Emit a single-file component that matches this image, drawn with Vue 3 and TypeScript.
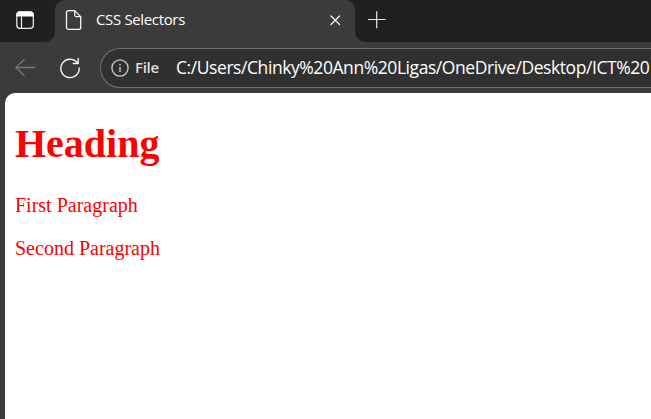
<script setup lang="ts">
const tabTitle: string = 'CSS Selectors'
const address: string = 'C:/Users/Chinky%20Ann%20Ligas/OneDrive/Desktop/ICT%20'
const paragraphs: string[] = ['First Paragraph', 'Second Paragraph']
</script>

<template>
  <div class="browser">
    <div class="strip">
      <div class="strip-left">
        <svg width="20" height="20" viewBox="0 0 20 20" fill="none" stroke="#f2f2f2" stroke-width="1.2">
          <rect x="1.8" y="1.8" width="16.5" height="16.5" rx="3" />
          <path d="M1.5 4.5a3 3 0 0 1 3-3h11a3 3 0 0 1 3 3v2h-17z" fill="#fff" stroke="none" />
          <path d="M6.5 6v12" />
        </svg>
      </div>
      <div class="tab-back">
        <div class="tab">
          <svg class="file" width="18" height="22" viewBox="0 0 18 22" fill="none" stroke="#f5f5f5" stroke-width="1.3" stroke-linejoin="round">
            <path d="M3.5 1.6h6.2l6 6v10.8a2 2 0 0 1-2 2H3.500a2 2 0 0 1-2-2V3.600a2 2 0 0 1 2-2z" />
            <path d="M9.700 1.600v4.500a1.500 1.500 0 0 0 1.500 1.500h4.500" />
          </svg>
          <span class="title">{{ tabTitle }}</span>
          <svg class="close" width="12" height="12" viewBox="0 0 12 12" stroke="#f5f5f5" stroke-width="1.3" stroke-linecap="round">
            <path d="M2 2l8.500 8.500M10.500 2l-8.500 8.500" />
          </svg>
        </div>
      </div>
      <div class="strip-right">
        <svg width="18" height="18" viewBox="0 0 18 18" stroke="#e8e8e8" stroke-width="1.2">
          <path d="M8.700 .3v17M.1 8.500h17.400" />
        </svg>
      </div>
    </div>
    <div class="toolbar">
      <svg class="back" width="22" height="20" viewBox="0 0 22 20" fill="none" stroke="#777" stroke-width="1.3">
        <path d="M10.500 1.300L1.800 9.500l8.700 8.200M2 9.500h19" />
      </svg>
      <svg class="reload" width="22" height="22" viewBox="0 0 22 22" fill="none" stroke="#f5f5f5" stroke-width="1.4" stroke-linecap="round" stroke-linejoin="round">
        <path d="M18.400 5.900A9.200 9.200 0 1 0 20.200 11" />
        <path d="M19.200 1.500v5h-5" />
      </svg>
      <div class="address">
        <svg width="18" height="18" viewBox="0 0 18 18" fill="none" stroke="#cfcfcf" stroke-width="1.3">
          <circle cx="9" cy="9" r="8.100" />
          <path d="M9 8v5" />
          <circle cx="9" cy="5.600" r=".9" fill="#cfcfcf" stroke="none" />
        </svg>
        <span class="scheme">File</span>
        <span class="url">{{ address }}</span>
      </div>
    </div>
    <main class="page">
      <h1>Heading</h1>
      <p v-for="text in paragraphs" :key="text">{{ text }}</p>
    </main>
  </div>
</template>

<style>
body {
  margin: 0;
  overflow: hidden;
}
</style>

<style scoped>
.browser {
  display: flex;
  flex-direction: column;
  width: 100vw;
  height: 100vh;
  overflow: hidden;
  background: #3b3b3b;
  font-family: "Open Sans", "Noto Sans", sans-serif;
}
svg {
  display: block;
  flex: none;
}
.strip {
  display: flex;
  flex: none;
  height: 42px;
}
.strip-left {
  box-sizing: border-box;
  width: 55px;
  padding: 10px 0 0 15px;
  background: #202020;
  border-bottom-right-radius: 10px;
}
.tab-back {
  width: 300px;
  background: linear-gradient(#202020 50%, #3b3b3b 50%);
}
.tab {
  display: flex;
  align-items: center;
  box-sizing: border-box;
  height: 42px;
  padding: 0 14px 2px 10px;
  background: #3b3b3b;
  border-radius: 10px 10px 0 0;
}
.title {
  flex: 1;
  margin: -2px 0 0 13px;
  color: #fff;
  font-size: 15px;
  line-height: 20px;
  letter-spacing: -0.35px;
  white-space: nowrap;
}
.strip-right {
  flex: 1;
  box-sizing: border-box;
  padding: 11px 0 0 13px;
  background: #202020;
  border-bottom-left-radius: 10px;
}
.toolbar {
  display: flex;
  flex: none;
  align-items: center;
  box-sizing: border-box;
  height: 51px;
  padding-left: 14px;
}
.back {
  margin-right: 23px;
}
.reload {
  margin-right: 19px;
}
.address {
  display: flex;
  flex: 1;
  align-items: center;
  box-sizing: border-box;
  min-width: 0;
  height: 40px;
  padding-left: 10px;
  overflow: hidden;
  color: #fff;
  background: #303030;
  border: 1px solid #707070;
  border-right: 0;
  border-radius: 20px 0 0 20px;
  white-space: nowrap;
}
.scheme {
  width: 41px;
  margin-left: 6px;
  color: #dedede;
  font-size: 15px;
  font-weight: 600;
  letter-spacing: -0.3px;
  margin-top: -2px;
}
.url {
  font-size: 17.5px;
  letter-spacing: -0.43px;
  margin-top: -1px;
}
.page {
  flex: 1;
  box-sizing: border-box;
  margin-left: 5px;
  padding-left: 10px;
  color: #f00;
  background: #fff;
  border-top-left-radius: 10px;
  font-family: "Liberation Serif", "Times New Roman", serif;
}
h1 {
  margin: 28px 0 27px;
  font-size: 40px;
  line-height: 46px;
}
p {
  margin: 0 0 20px;
  font-size: 20px;
  line-height: 23px;
}
</style>
